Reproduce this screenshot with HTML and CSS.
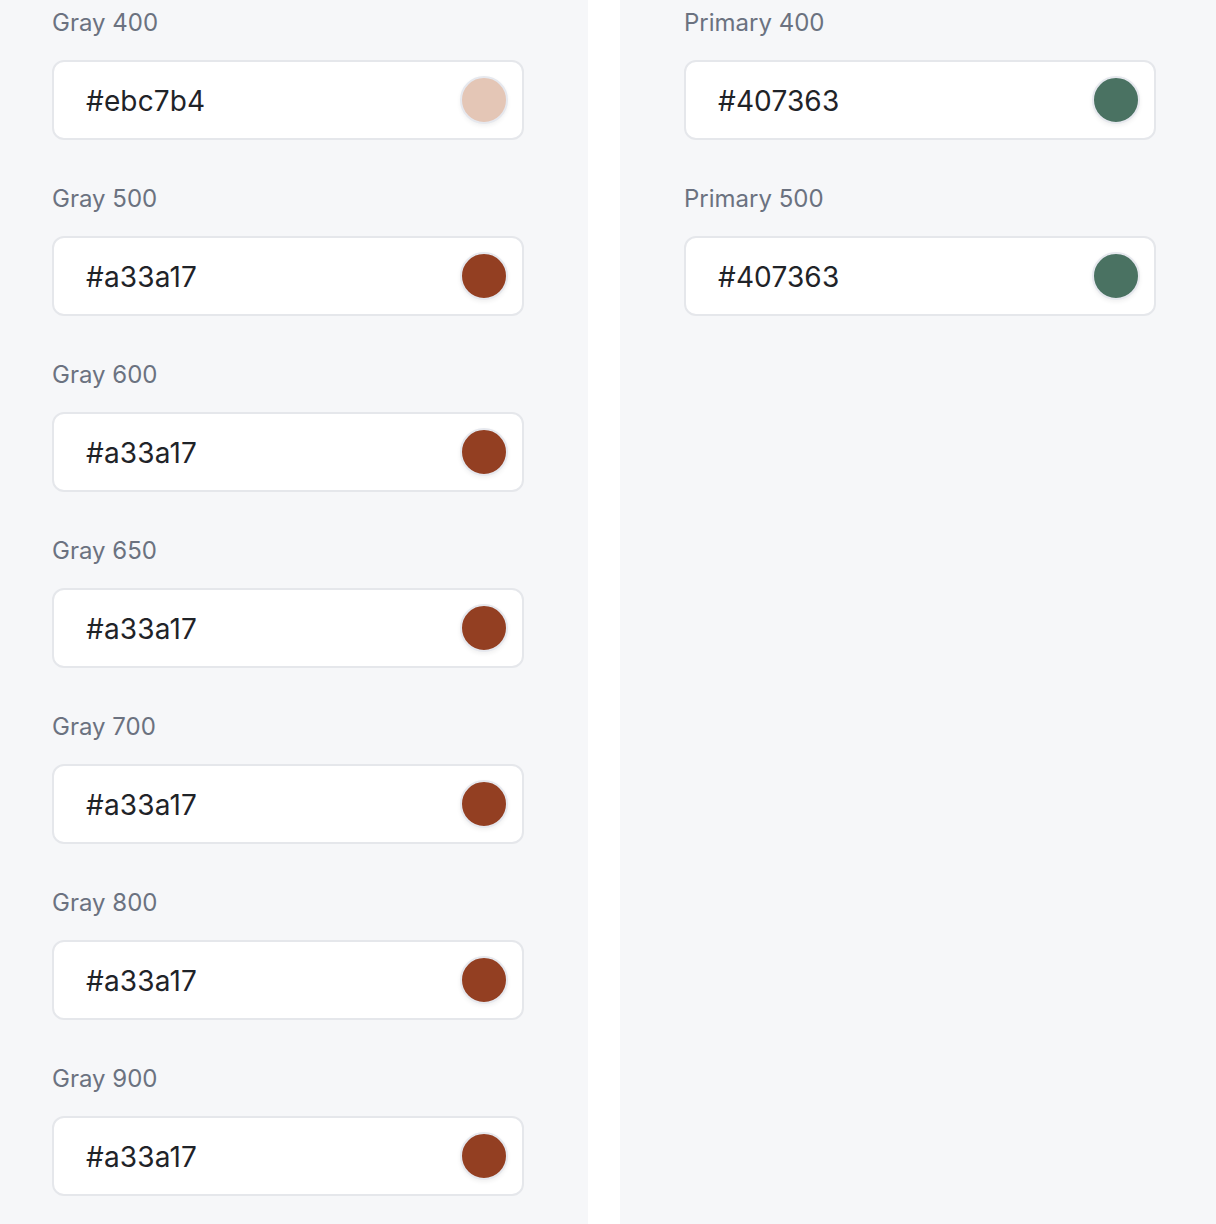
FILE: index.html
```html
<!DOCTYPE html>
<html>
	<head>
		<meta charset="utf-8">
		<title>Colors</title>
		<link rel="stylesheet" href="styles.css">
	</head>
	<body>
		<div class="page">
			<div class="panel panel-left">
				<div class="field">
					<label class="field-label">Gray 400</label>
					<div class="color-input">
						<span class="color-value">#ebc7b4</span>
						<span class="swatch swatch-peach"></span>
					</div>
				</div>
				<div class="field">
					<label class="field-label">Gray 500</label>
					<div class="color-input">
						<span class="color-value">#a33a17</span>
						<span class="swatch swatch-brown"></span>
					</div>
				</div>
				<div class="field">
					<label class="field-label">Gray 600</label>
					<div class="color-input">
						<span class="color-value">#a33a17</span>
						<span class="swatch swatch-brown"></span>
					</div>
				</div>
				<div class="field">
					<label class="field-label">Gray 650</label>
					<div class="color-input">
						<span class="color-value">#a33a17</span>
						<span class="swatch swatch-brown"></span>
					</div>
				</div>
				<div class="field">
					<label class="field-label">Gray 700</label>
					<div class="color-input">
						<span class="color-value">#a33a17</span>
						<span class="swatch swatch-brown"></span>
					</div>
				</div>
				<div class="field">
					<label class="field-label">Gray 800</label>
					<div class="color-input">
						<span class="color-value">#a33a17</span>
						<span class="swatch swatch-brown"></span>
					</div>
				</div>
				<div class="field">
					<label class="field-label">Gray 900</label>
					<div class="color-input">
						<span class="color-value">#a33a17</span>
						<span class="swatch swatch-brown"></span>
					</div>
				</div>
			</div>
			<div class="panel panel-right">
				<div class="field">
					<label class="field-label">Primary 400</label>
					<div class="color-input">
						<span class="color-value">#407363</span>
						<span class="swatch swatch-green"></span>
					</div>
				</div>
				<div class="field">
					<label class="field-label">Primary 500</label>
					<div class="color-input">
						<span class="color-value">#407363</span>
						<span class="swatch swatch-green"></span>
					</div>
				</div>
			</div>
		</div>
	</body>
</html>
```

FILE: styles.css
```css
* {
	margin: 0;
	padding: 0;
	box-sizing: border-box;
}

body {
	background: #fff;
	font-family: Inter, "Liberation Sans", sans-serif;
}

.page {
	display: flex;
	gap: 32px;
	min-height: 100vh;
	overflow: hidden;
}

.panel {
	background: #f6f7f9;
	padding-top: 7px;
	display: flex;
	flex-direction: column;
	gap: 43px;
}

.panel-left {
	width: 588px;
	padding-left: 52px;
	padding-right: 64px;
}

.panel-right {
	flex: 1;
	padding-left: 64px;
	padding-right: 60px;
}

.field {
	display: flex;
	flex-direction: column;
	gap: 21px;
}

.field-label {
	font-size: 24px;
	line-height: 32px;
	color: #6b7280;
}

.color-input {
	height: 80px;
	width: 472px;
	background: #fff;
	border: 2px solid #e5e7eb;
	border-radius: 12px;
	display: flex;
	align-items: center;
	justify-content: space-between;
	padding: 0 14px 0 32px;
}

.color-value {
	font-size: 28px;
	line-height: 34px;
	padding-top: 1px;
	color: #1f2328;
	letter-spacing: 0.15px;
}

.swatch {
	width: 48px;
	height: 48px;
	border-radius: 50%;
	border: 2px solid #e6e8ee;
	box-shadow: 0 2px 4px rgba(0, 0, 0, 0.06);
}

.swatch-peach {
	background: #e4c6b6;
}

.swatch-brown {
	background: #933f22;
}

.swatch-green {
	background: #4a7262;
}
```
